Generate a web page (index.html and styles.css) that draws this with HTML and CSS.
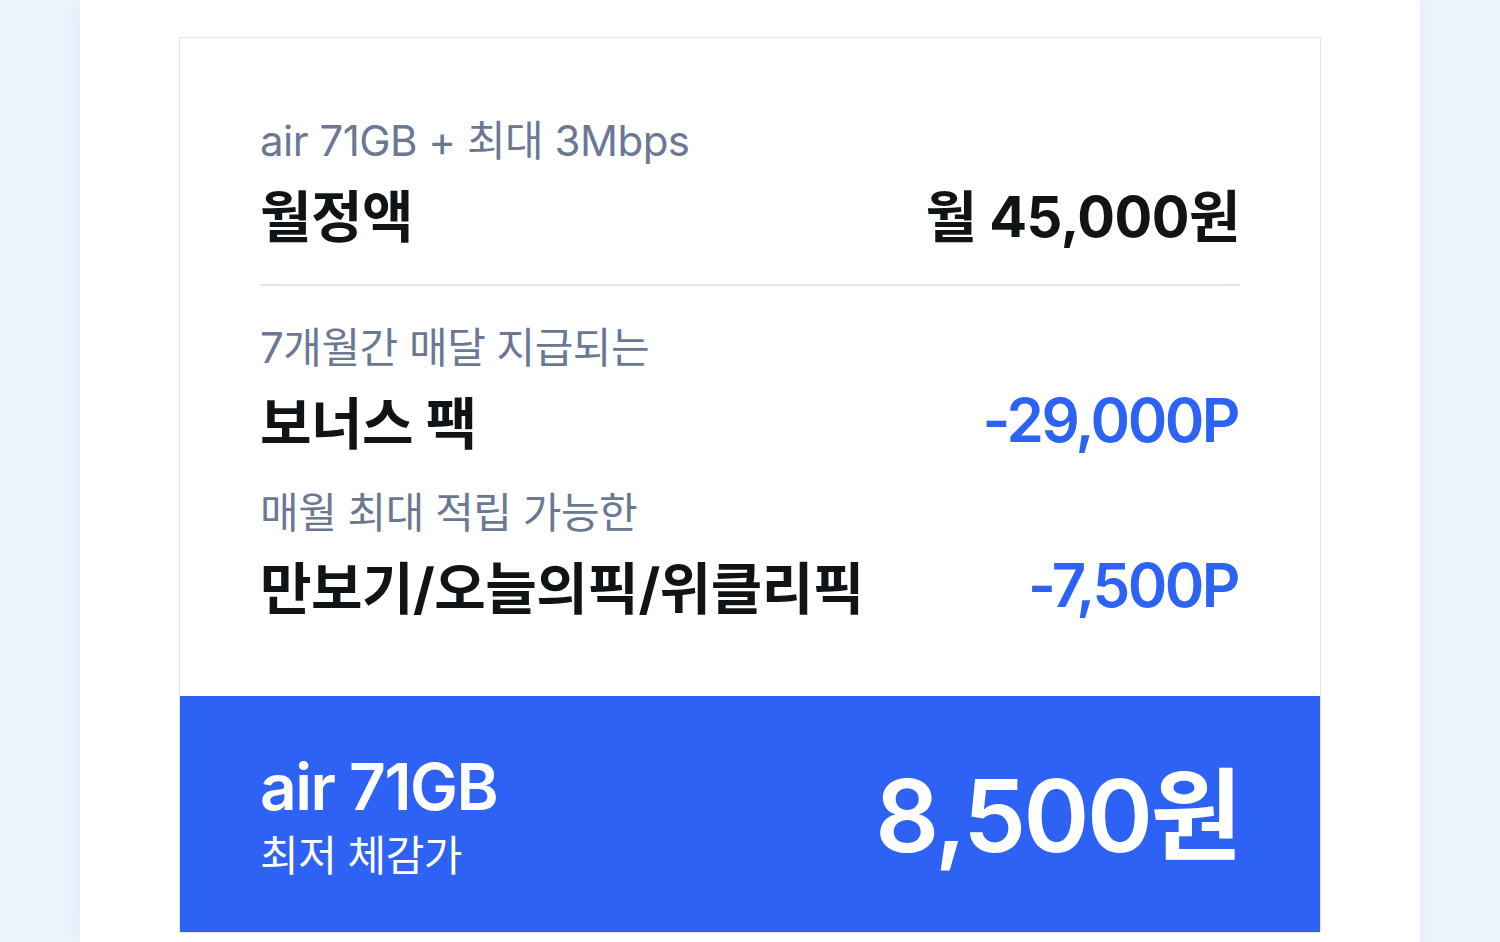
FILE: index.html
```html
<!DOCTYPE html>
<html lang="ko">
<head>
<meta charset="utf-8">
<link rel="stylesheet" href="styles.css">
</head>
<body>
<div class="page">
  <div class="card">
    <div class="card-body">
      <div class="group">
        <div class="sub">air 71GB + 최대 3Mbps</div>
        <div class="row">
          <div class="label">월정액</div>
          <div class="price">월 45,000원</div>
        </div>
      </div>
      <div class="divider"></div>
      <div class="group">
        <div class="sub">7개월간 매달 지급되는</div>
        <div class="row">
          <div class="label">보너스 팩</div>
          <div class="point">-29,000P</div>
        </div>
      </div>
      <div class="group group-second">
        <div class="sub">매월 최대 적립 가능한</div>
        <div class="row">
          <div class="label">만보기/오늘의픽/위클리픽</div>
          <div class="point">-7,500P</div>
        </div>
      </div>
    </div>
    <div class="total">
      <div class="total-left">
        <div class="total-name">air 71GB</div>
        <div class="total-desc">최저 체감가</div>
      </div>
      <div class="total-price">8,500원</div>
    </div>
  </div>
</div>
</body>
</html>
```

FILE: styles.css
```css
* { box-sizing: border-box; }
html, body { margin: 0; padding: 0; }
body {
  background: #eef4fd;
  font-family: "Inter", "Noto Sans CJK KR", sans-serif;
  color: #111416;
  overflow: hidden;
}
.page {
  width: 1340px;
  margin: 0 auto;
  min-height: 942px;
  background: #ffffff;
  padding-top: 37px;
  box-shadow: 0 0 24px rgba(120, 150, 210, 0.12);
}
.card {
  margin: 0 99px;
  border: 1px solid #e4e6ec;
  background: #fff;
}
.card-body {
  padding: 75px 80px 72px;
}
.sub {
  font-size: 42px;
  line-height: 56px;
  color: #6b7894;
  letter-spacing: -0.5px;
}
.row {
  display: flex;
  justify-content: space-between;
  align-items: center;
  height: 80px;
  margin-top: 3px;
}
.label {
  font-size: 56px;
  font-weight: 700;
  letter-spacing: -0.5px;
}
.price {
  font-size: 56px;
  font-weight: 700;
  letter-spacing: -0.5px;
}
.point {
  font-size: 60px;
  font-weight: 600;
  color: #2c63f5;
  letter-spacing: -2.5px;
  margin-right: 2px;
  margin-top: 2px;
}
.divider {
  height: 2px;
  background: #e4e6ee;
  margin: 32px 0 34px;
}
.group-second {
  margin-top: 26px;
}
.total {
  background: #2d62f5;
  color: #fff;
  display: flex;
  justify-content: space-between;
  align-items: center;
  padding: 55px 80px 48px;
}
.total-name {
  font-size: 64px;
  font-weight: 600;
  letter-spacing: -1.5px;
  line-height: 72px;
}
.total-desc {
  font-size: 42px;
  line-height: 56px;
  margin-top: 5px;
  letter-spacing: -0.5px;
}
.total-price {
  font-size: 100px;
  font-weight: 600;
  letter-spacing: -2.5px;
  line-height: 110px;
  margin-bottom: 4px;
}
```
